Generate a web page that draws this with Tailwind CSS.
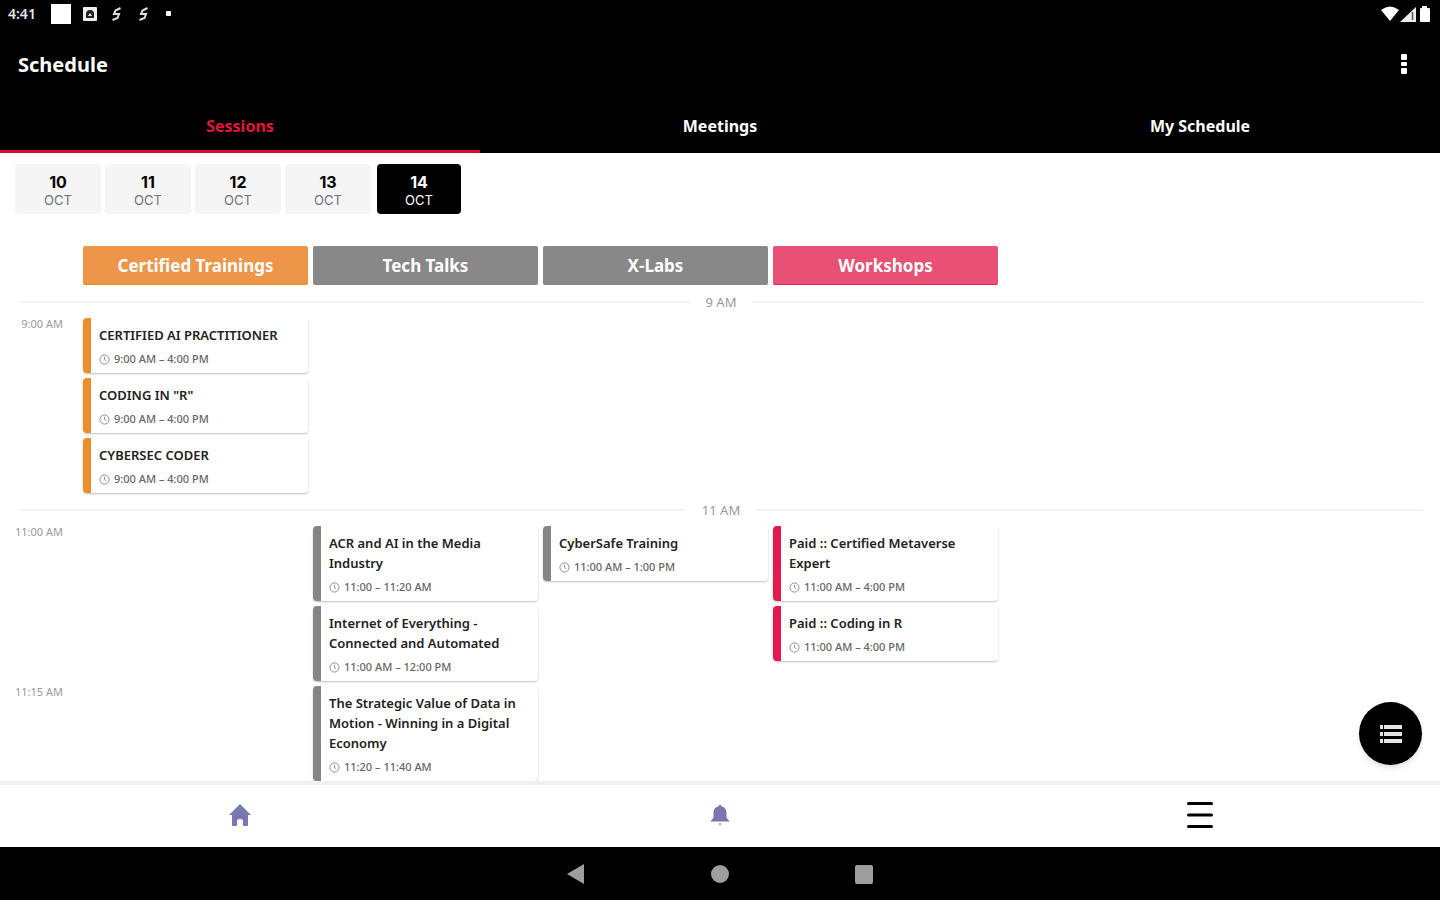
<!DOCTYPE html>
<html lang="en">
<head>
    <meta charset="UTF-8">
    <meta name="viewport" content="width=device-width, initial-scale=1.0">
    <title>Schedule</title>
    <script src="https://cdn.jsdelivr.net/npm/@tailwindcss/browser@4"></script>
</head>
<body class="h-screen flex flex-col bg-white text-black font-['Noto_Sans',sans-serif] overflow-hidden">
    <!-- Header -->
    <header class="bg-black text-white shrink-0">
        <!-- Status bar -->
        <div class="h-7 flex items-center justify-between pl-2 pr-2">
            <div class="flex items-center gap-[11px]">
                <span class="w-8 text-sm font-semibold text-gray-200">4:41</span>
                <svg class="w-5 h-5" viewBox="0 0 20 20" fill="#fff"><rect width="20" height="20"/></svg>
                <svg class="w-4 h-4" viewBox="0 0 16 16"><rect x="1" y="1" width="14" height="14" rx="1" fill="#eee"/><path d="M4 12V8a4 4 0 0 1 8 0v4z" fill="#222"/><path d="M6 10l2-3 2 3z" fill="#eee"/></svg>
                <svg class="w-4 h-4" viewBox="0 0 16 16" fill="none" stroke="#ddd" stroke-width="2"><path d="M11.500 2L6.500 4.500L5 8h5L8.500 12l-5 2"/></svg>
                <svg class="w-4 h-4" viewBox="0 0 16 16" fill="none" stroke="#ddd" stroke-width="2"><path d="M11.500 2L6.500 4.500L5 8h5L8.500 12l-5 2"/></svg>
                <svg class="w-3 h-3" viewBox="0 0 12 12" fill="#fff"><rect x="3" y="3" width="5" height="5" rx="1"/></svg>
            </div>
            <div class="flex items-center gap-px">
                <svg class="w-[18px] h-4" viewBox="0 0 18 16" fill="#fff"><path d="M0 4Q9-3 18 4L9 15z"/></svg>
                <svg class="w-[17px] h-4" viewBox="0 0 17 16"><path d="M0 16L16 1v15z" fill="#eee"/><path d="M12.500 6v8" stroke="#555" stroke-width="1.500"/></svg>
                <svg class="w-[14px] h-[18px]" viewBox="0 0 14 18" fill="#fff"><path d="M4 1h5v2h2q1 0 1 1v12q0 1-1 1H3q-1 0-1-1V4q0-1 1-1h1z"/></svg>
            </div>
        </div>

        <div class="h-[74px] flex items-center justify-between pl-[18px] pr-6">
            <h1 class="text-xl font-bold">Schedule</h1>
            <button aria-label="More options" class="w-6 h-10 flex items-center justify-center">
                <svg class="w-6 h-6" viewBox="0 0 24 24" fill="#fff"><rect x="9" y="1" width="6" height="6" rx="1"/><rect x="9" y="9" width="6" height="4" rx="1"/><rect x="9" y="15" width="6" height="6" rx="1"/></svg>
            </button>
        </div>

        <nav class="grid grid-cols-3 h-[51px] text-base font-bold">
            <button class="text-[#e0163c] border-b-3 border-[#d3122b]">Sessions</button>
            <button class="border-b-3 border-black">Meetings</button>
            <button class="border-b-3 border-black">My Schedule</button>
        </nav>
    </header>

    <!-- Schedule -->
    <main class="relative flex-1 min-h-0">
        <div class="h-full overflow-hidden">
            <div class="flex gap-1 pl-[15px] pt-[11px] font-['Inter',sans-serif]">
                <button class="w-[86px] h-[50px] pt-1 rounded bg-[#f5f5f5] flex flex-col items-center justify-center"><b class="text-base leading-[19px]">10</b><span class="text-[13px] leading-[17px] text-gray-500">OCT</span></button>
                <button class="w-[86px] h-[50px] pt-1 rounded bg-[#f5f5f5] flex flex-col items-center justify-center"><b class="text-base leading-[19px]">11</b><span class="text-[13px] leading-[17px] text-gray-500">OCT</span></button>
                <button class="w-[86px] h-[50px] pt-1 rounded bg-[#f5f5f5] flex flex-col items-center justify-center"><b class="text-base leading-[19px]">12</b><span class="text-[13px] leading-[17px] text-gray-500">OCT</span></button>
                <button class="w-[86px] h-[50px] pt-1 rounded bg-[#f5f5f5] flex flex-col items-center justify-center"><b class="text-base leading-[19px]">13</b><span class="text-[13px] leading-[17px] text-gray-500">OCT</span></button>
                <button class="w-[84px] h-[50px] ml-0.5 pt-1 rounded bg-black text-white flex flex-col items-center justify-center"><b class="text-base leading-[19px]">14</b><span class="text-[13px] leading-[17px]">OCT</span></button>
            </div>

            <div class="flex gap-[5px] pl-[83px] mt-8 text-[17px] font-bold text-white text-center leading-10">
                <h2 class="w-[225px] h-[39px] rounded-xs bg-[#ed964a] border-b border-[#ee8a1c]">Certified Trainings</h2>
                <h2 class="w-[225px] h-[39px] rounded-xs bg-[#888888]">Tech Talks</h2>
                <h2 class="w-[225px] h-[39px] rounded-xs bg-[#888888]">X-Labs</h2>
                <h2 class="w-[225px] h-[39px] rounded-xs bg-[#e85075] border-b border-[#e6215a]">Workshops</h2>
            </div>

            <div id="board" class="pt-[5px]"></div>
        </div>

        <button aria-label="List view" class="absolute right-[18px] bottom-4 w-[63px] h-[63px] rounded-full bg-black shadow-md flex items-center justify-center">
            <svg class="w-6 h-6" viewBox="0 0 24 24" fill="#e5e5e5"><path d="M1 3h3v4H1zM5 3h18v4H5zM1 10h3v4H1zM5 10h18v4H5zM1 17h3v4H1zM5 17h18v4H5z"/></svg>
        </button>
    </main>

    <!-- Bottom navigation -->
    <nav class="grid grid-cols-3 h-[66px] shrink-0 border-t-4 border-[#f0f0f0] bg-white pb-0.5">
        <a href="#" aria-label="Home" class="flex items-center justify-center">
            <svg class="w-6 h-6" viewBox="0 0 24 24" fill="#7877b3"><path d="M12 1L1 12h3v10q0 1 1 1h3q1 0 1-1v-4q0-2 3-2t3 2v4q0 1 1 1h3q1 0 1-1V12h3z"/></svg>
        </a>
        <a href="#" aria-label="Notifications" class="flex items-center justify-center">
            <svg class="w-6 h-6" viewBox="0 0 24 24"><path d="M10.500 3.200a1.500 1.500 0 0 1 3 0C17 4 18.500 7 18.500 10v4.500l3 4H2.500l3-4V10c0-3 1.500-6 5-6.800z" fill="#7877b3"/><path d="M10 20h4q-.3 3-2 3t-2-3z" fill="#c9c9d4"/></svg>
        </a>
        <a href="#" aria-label="Menu" class="flex items-center justify-center">
            <svg class="w-7 h-7" viewBox="0 0 28 28" stroke="#000" stroke-width="3" stroke-linecap="round"><path d="M2.500 2.500h23M2.500 14h23M2.500 25.500h23"/></svg>
        </a>
    </nav>

    <!-- System buttons -->
    <div class="h-[53px] shrink-0 bg-black flex items-center justify-center gap-[120px]">
        <button aria-label="Back"><svg class="w-6 h-6" viewBox="0 0 24 24" fill="#9e9e9e"><path d="M3 12L20 2v20z"/></svg></button>
        <button aria-label="Home screen"><svg class="w-6 h-6" viewBox="0 0 24 24" fill="#9e9e9e"><circle cx="12" cy="12" r="9"/></svg></button>
        <button aria-label="Recent apps"><svg class="w-6 h-6" viewBox="0 0 24 24" fill="#9e9e9e"><rect x="3" y="3" width="18" height="19" rx="2"/></svg></button>
    </div>

    <script>
        const barColors = ['bg-[#ee8e2b]', 'bg-[#858585]', 'bg-[#858585]', 'bg-[#e6194f]'];

        // Each row has one list of sessions per track
        const hours = [
            { label: '9 AM', rows: [
                { time: '9:00 AM', tracks: [[
                    ['CERTIFIED AI PRACTITIONER', '9:00 AM – 4:00 PM'],
                    ['CODING IN "R"', '9:00 AM – 4:00 PM'],
                    ['CYBERSEC CODER', '9:00 AM – 4:00 PM']
                ], [], [], []] }
            ] },
            { label: '11 AM', rows: [
                { time: '11:00 AM', tracks: [[], [
                    ['ACR and AI in the Media Industry', '11:00 – 11:20 AM'],
                    ['Internet of Everything - Connected and Automated', '11:00 AM – 12:00 PM']
                ], [
                    ['CyberSafe Training', '11:00 AM – 1:00 PM']
                ], [
                    ['Paid :: Certified Metaverse Expert', '11:00 AM – 4:00 PM'],
                    ['Paid :: Coding in R', '11:00 AM – 4:00 PM']
                ]] },
                { time: '11:15 AM', tracks: [[], [
                    ['The Strategic Value of Data in Motion - Winning in a Digital Economy', '11:20 – 11:40 AM']
                ], [], []] }
            ] }
        ];

        const card = ([title, time], color) => `
            <article class="flex rounded overflow-hidden bg-white shadow-[0_1px_2px_rgba(0,0,0,0.25)]">
                <div class="w-2 shrink-0 ${color}"></div>
                <div class="flex-1 min-w-0 pl-2 pr-2 pt-[7px] pb-1.5">
                    <h3 class="text-[13px] leading-5 font-semibold text-[#222]">${title}</h3>
                    <p class="flex items-center gap-1 mt-1.5 text-[11px] leading-4 font-medium text-[#666]">
                        <svg class="w-[11px] h-[11px]" viewBox="0 0 12 12" fill="none" stroke="#888"><circle cx="6" cy="6" r="5"/><path d="M6 3v3l2 1.500"/></svg>
                        ${time}
                    </p>
                </div>
            </article>`;

        const row = ({ time, tracks }) => `
            <section class="grid grid-cols-[78px_225px_225px_225px_225px] gap-x-[5px] items-start mb-[5px]">
                <time class="pr-[15px] text-right text-[11px] leading-3 text-[#999]">${time}</time>
                ${tracks.map((list, i) => `<div class="flex flex-col gap-[5px]">${list.map(s => card(s, barColors[i])).join('')}</div>`).join('')}
            </section>`;

        document.getElementById('board').innerHTML = hours.map(hour => `
            <div class="flex items-center h-[23px] pl-[19px] pr-[17px] mb-[5px]">
                <hr class="flex-1 border-t-2 border-[#f3f3f3]">
                <span class="px-4 text-[13px] leading-4 text-[#999]">${hour.label}</span>
                <hr class="flex-1 border-t-2 border-[#f3f3f3]">
            </div>
            ${hour.rows.map(row).join('')}`).join('');
    </script>
</body>
</html>
